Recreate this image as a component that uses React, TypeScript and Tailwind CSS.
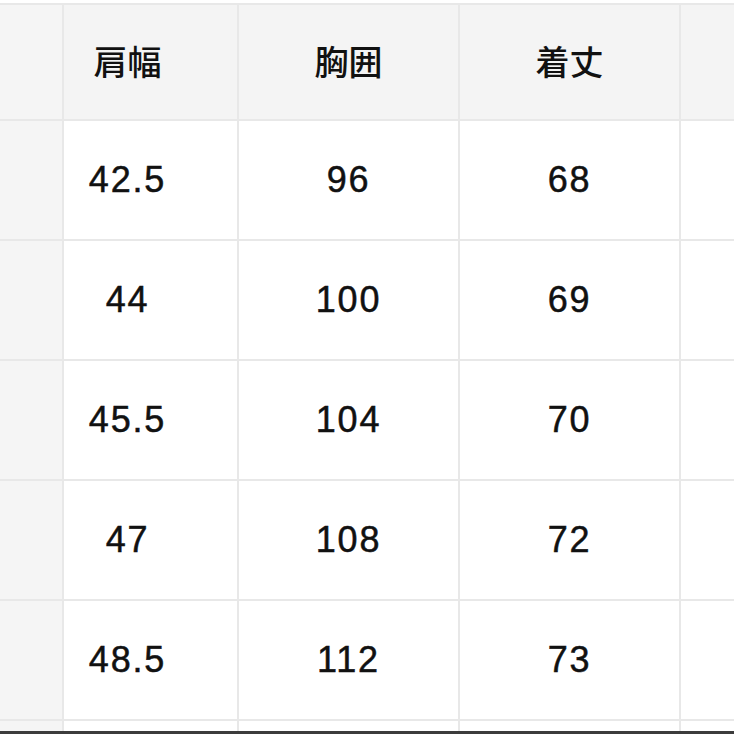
const rows = [
  ["42.5", "96", "68"],
  ["44", "100", "69"],
  ["45.5", "104", "70"],
  ["47", "108", "72"],
  ["48.5", "112", "73"],
];

const line = "border-[#e8e8e8]";
const num = "text-[36px] tracking-[0.05em] text-[#111] [-webkit-text-stroke:0.5px_#111] [font-family:'Liberation_Sans',Arial,sans-serif]";
const head = "text-[34px] font-medium text-[#111] pb-[4px] [font-family:'Noto_Sans_CJK_JP','Liberation_Sans',sans-serif]";

function Row({ cells, height, header }: { cells: string[]; height: string; header?: boolean }) {
  const bg = header ? "bg-[#f4f4f4]" : "bg-white";
  const txt = header ? head : num;
  return (
    <div className={`flex ${height} border-b-2 ${line}`}>
      <div className={`w-[64px] shrink-0 border-r-2 ${line} bg-[#f5f5f5]`} />
      <div className={`w-[175px] shrink-0 border-r-2 ${line} ${bg} flex items-center justify-center pr-[46px]`}>
        <span className={txt}>{cells[0]}</span>
      </div>
      <div className={`w-[221px] shrink-0 border-r-2 ${line} ${bg} flex items-center justify-center`}>
        <span className={txt}>{cells[1]}</span>
      </div>
      <div className={`w-[221px] shrink-0 border-r-2 ${line} ${bg} flex items-center justify-center`}>
        <span className={txt}>{cells[2]}</span>
      </div>
      <div className={`flex-1 ${bg}`} />
    </div>
  );
}

export default function App() {
  return (
    <div className="w-[734px] h-[734px] overflow-hidden bg-white flex flex-col">
      <div className="h-[3px] shrink-0 bg-white" />
      <div className={`shrink-0 border-t-2 ${line}`} />
      <Row header cells={["肩幅", "胸囲", "着丈"]} height="h-[116px] shrink-0" />
      {rows.map((r, i) => (
        <Row key={i} cells={r} height="h-[120px] shrink-0" />
      ))}
      <div className="flex h-[10px] shrink-0">
        <div className={`w-[64px] shrink-0 border-r-2 ${line} bg-[#f5f5f5]`} />
        <div className={`w-[175px] shrink-0 border-r-2 ${line}`} />
        <div className={`w-[221px] shrink-0 border-r-2 ${line}`} />
        <div className={`w-[221px] shrink-0 border-r-2 ${line}`} />
        <div className="flex-1" />
      </div>
      <div className="flex-1 bg-[#3c3c3c]" />
    </div>
  );
}
